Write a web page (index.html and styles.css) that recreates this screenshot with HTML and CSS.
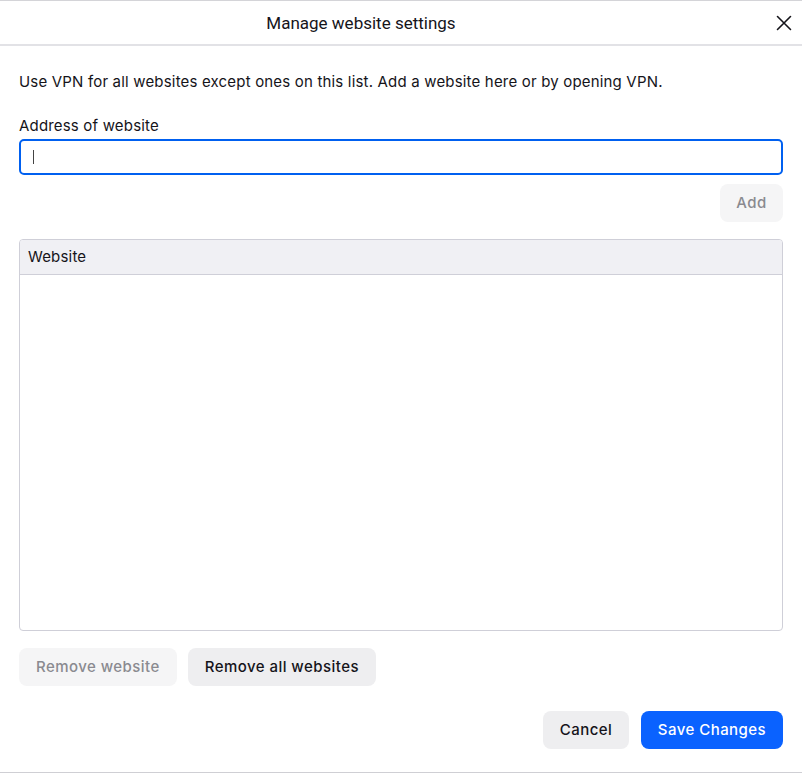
FILE: index.html
```html
<!DOCTYPE html>
<html>
<head>
<meta charset="utf-8">
<link rel="stylesheet" href="styles.css">
</head>
<body>
<div class="dialog">
  <header class="header">
    <h1 class="title">Manage website settings</h1>
    <button class="close" aria-label="Close">
      <svg width="16" height="16" viewBox="0 0 16 16"><path d="M1.5 1.5 L14.5 14.5 M14.5 1.5 L1.5 14.5" stroke="#15141a" stroke-width="1.6" fill="none" stroke-linecap="round"/></svg>
    </button>
  </header>
  <main class="content">
    <p class="desc">Use VPN for all websites except ones on this list. Add a website here or by opening VPN.</p>
    <label class="label">Address of website</label>
    <div class="input"><span class="caret"></span></div>
    <div class="add-row"><button class="btn btn-disabled btn-add">Add</button></div>
    <div class="table">
      <div class="table-head">Website</div>
      <div class="table-body"></div>
    </div>
    <div class="remove-row">
      <button class="btn btn-disabled">Remove website</button>
      <button class="btn btn-secondary">Remove all websites</button>
    </div>
    <div class="footer">
      <button class="btn btn-secondary btn-cancel">Cancel</button>
      <button class="btn btn-primary">Save Changes</button>
    </div>
  </main>
</div>
</body>
</html>
```
FILE: styles.css
```css
html, body {
  margin: 0;
  padding: 0;
  background: #ffffff;
}
body {
  font-family: Inter, "Noto Sans", sans-serif;
  color: #15141a;
  width: 802px;
  height: 775px;
  overflow: hidden;
}
.dialog {
  height: 773px;
  border-top: 1px solid #d4d4d8;
  border-bottom: 1px solid #cfcfd4;
  box-sizing: border-box;
  display: flex;
  flex-direction: column;
}
.header {
  height: 43px;
  border-bottom: 2px solid #e2e2e6;
  display: flex;
  align-items: center;
  justify-content: center;
  padding-right: 80px;
  position: relative;
  flex: none;
}
.title {
  margin: 0;
  font-family: Roboto, "Liberation Sans", sans-serif;
  font-size: 17px;
  font-weight: 400;
  color: #15141a;
}
.close {
  position: absolute;
  right: 10px;
  top: 14px;
  width: 16px;
  height: 16px;
  padding: 0;
  border: 0;
  background: none;
  display: flex;
}
.content {
  padding: 0 19px 0 19px;
  display: flex;
  flex-direction: column;
}
.desc {
  margin: 27px 0 0 0;
  font-size: 15px;
  line-height: 18px;
  letter-spacing: 0.18px;
}
.label {
  margin-top: 26px;
  font-size: 15px;
  line-height: 18px;
  letter-spacing: 0.18px;
}
.input {
  margin-top: 4px;
  height: 36px;
  box-sizing: border-box;
  border: 2px solid #0060f0;
  border-radius: 5px;
  display: flex;
  align-items: center;
  padding-left: 12px;
}
.caret {
  width: 1px;
  height: 14px;
  background: #444;
}
.add-row {
  margin-top: 9px;
  display: flex;
  justify-content: flex-end;
}
.btn {
  font-family: Inter, "Noto Sans", sans-serif;
  font-size: 15px;
  font-weight: 500;
  letter-spacing: 0.45px;
  height: 38px;
  border: 0;
  border-radius: 8px;
  padding: 0 17px;
  line-height: 38px;
}
.btn-disabled {
  background: #f5f5f6;
  color: #8a8a90;
}
.btn-add {
  width: 63px;
  padding: 0;
}
.btn-secondary {
  background: #eeeef0;
  color: #15141a;
}
.btn-primary {
  background: #0a62ff;
  color: #ffffff;
}
.table {
  margin-top: 17px;
  height: 392px;
  box-sizing: border-box;
  border: 1px solid #cfcfd8;
  border-radius: 4px;
  display: flex;
  flex-direction: column;
  overflow: hidden;
}
.table-head {
  height: 34px;
  flex: none;
  background: #f0f0f4;
  border-bottom: 1px solid #cfcfd8;
  font-size: 15px;
  line-height: 34px;
  letter-spacing: 0.18px;
  padding-left: 8px;
}
.table-body {
  flex: 1;
}
.remove-row {
  margin-top: 17px;
  display: flex;
  gap: 11px;
}
.footer {
  margin-top: 25px;
  display: flex;
  justify-content: flex-end;
  gap: 12px;
}
.btn-cancel {
  width: 86px;
  padding: 0;
}
.btn-primary {
  width: 142px;
  padding: 0;
}
```
